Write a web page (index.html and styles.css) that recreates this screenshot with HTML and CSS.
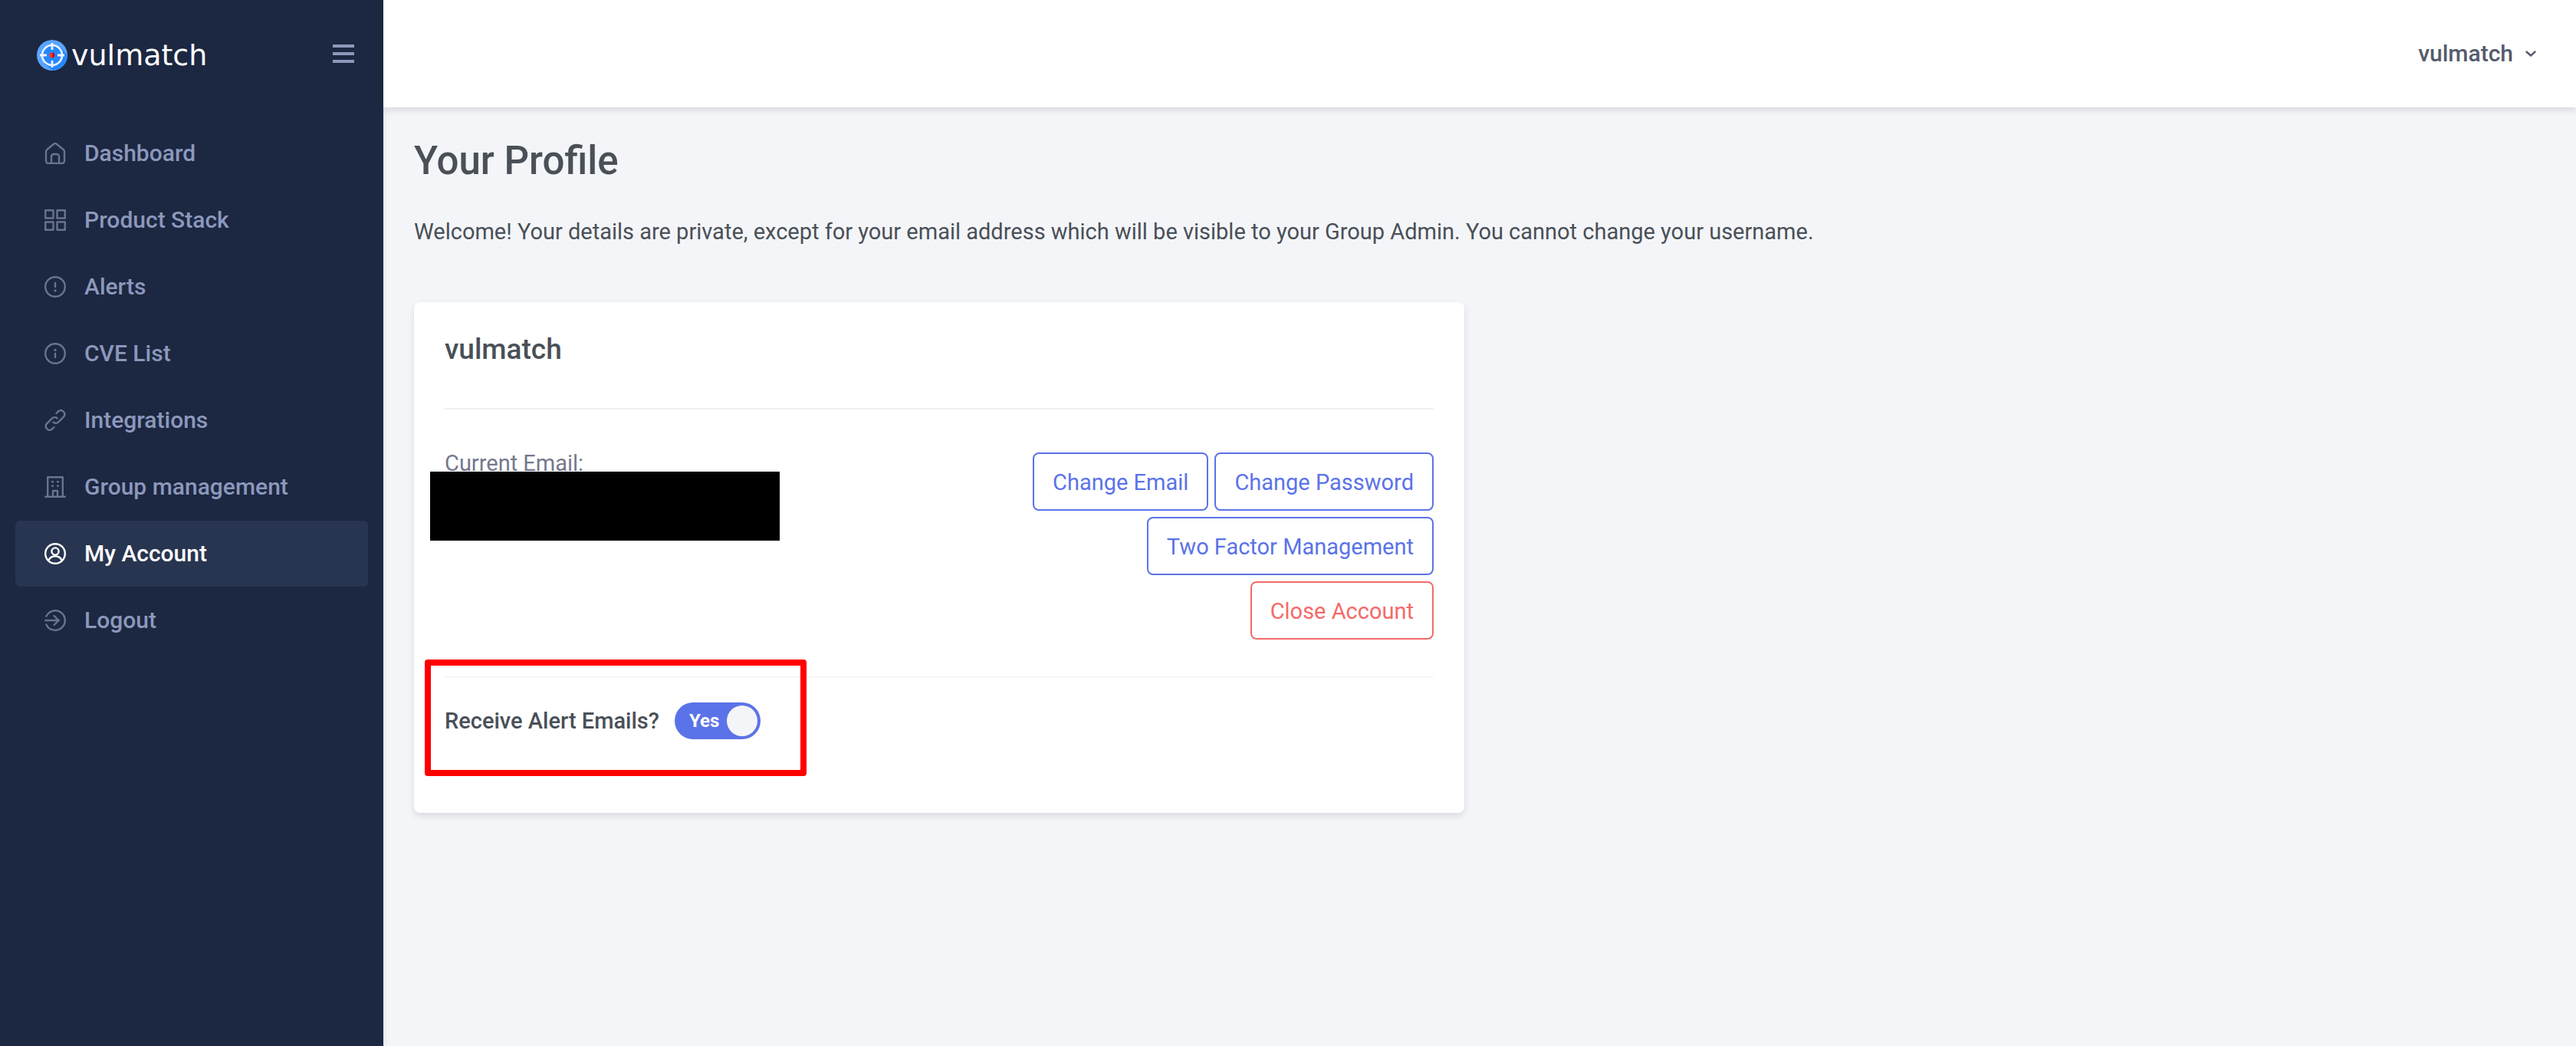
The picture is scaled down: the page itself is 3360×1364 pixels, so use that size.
FILE: index.html
```html
<!DOCTYPE html>
<html lang="en">
<head>
<meta charset="utf-8">
<meta name="viewport" content="width=device-width, initial-scale=1">
<title>Your Profile - vulmatch</title>
<link rel="stylesheet" href="styles.css">
</head>
<body>
<div class="app">
  <aside class="sidebar">
    <div class="brand-bar">
      <a class="brand" href="#">
        <svg class="brand-mark" viewBox="0 0 40 40" aria-hidden="true">
          <circle cx="20" cy="20" r="20" fill="#5aa4ff"/>
          <path d="M31 10 39.3 19A20 20 0 0 1 21 40L9.500 31z" fill="#2388ff"/>
          <circle cx="20" cy="20" r="13" fill="#2388ff" stroke="#eef2ff" stroke-width="2.600"/>
          <path d="M20 4v9M20 27v9M4 20h9M27 20h9" stroke="#eef2ff" stroke-width="2.800"/>
          <path d="M20 16.500a3.500 3.500 0 0 0 0 7z" fill="#ff3a1e"/>
          <path d="M20 16.500a3.500 3.500 0 0 1 0 7z" fill="#cc0a2c"/>
        </svg>
        <span>vulmatch</span>
      </a>
      <button class="menu-toggle" type="button" aria-label="Toggle menu">
        <svg viewBox="0 0 28 24" aria-hidden="true"><path d="M0 0h28v4H0zM0 10h28v4H0zM0 20h28v4H0z" fill="currentColor"/></svg>
      </button>
    </div>
    <nav class="nav">
      <a class="nav-item" href="#">
        <svg class="icon" viewBox="0 0 28 28" aria-hidden="true"><path d="M2 11.500a3 3 0 0 1 1-2.200L12.300 1.700a2.600 2.600 0 0 1 3.400 0L25 9.300a3 3 0 0 1 1 2.200V24a3 3 0 0 1-3 3H5a3 3 0 0 1-3-3zM9 27V18a3 3 0 0 1 3-3h4a3 3 0 0 1 3 3v9"/></svg>
        <span>Dashboard</span>
      </a>
      <a class="nav-item" href="#">
        <svg class="icon" viewBox="0 0 28 28" aria-hidden="true"><path d="M1.200 1.200h10.300v10.300H1.200zM16.500 1.200h10.300v10.300H16.500zM1.200 16.500h10.300v10.300H1.200zM16.500 16.500h10.300v10.300H16.500z"/></svg>
        <span>Product Stack</span>
      </a>
      <a class="nav-item" href="#">
        <svg class="icon" viewBox="0 0 28 28" aria-hidden="true"><circle cx="14" cy="14" r="12.800"/><path d="M14 9v5"/><path d="M14 18.800v.1" stroke-width="3.200"/></svg>
        <span>Alerts</span>
      </a>
      <a class="nav-item" href="#">
        <svg class="icon" viewBox="0 0 28 28" aria-hidden="true"><circle cx="14" cy="14" r="12.800"/><path d="M14 14v5"/><path d="M14 9.300v.1" stroke-width="3.200"/></svg>
        <span>CVE List</span>
      </a>
      <a class="nav-item" href="#">
        <svg class="icon" viewBox="0 0 28 28" aria-hidden="true"><path d="M11.500 16.500a5 5 0 0 0 6.700-.2l7-7a5 5 0 0 0-7-7L15.500 5M16.500 11.500a5 5 0 0 0-6.700.2l-7 7a5 5 0 0 0 7 7l2.700-2.700"/></svg>
        <span>Integrations</span>
      </a>
      <a class="nav-item" href="#">
        <svg class="icon" viewBox="0 0 28 28" aria-hidden="true"><path d="M1.200 26.800h25.600M4.200 26.500V1.200h19.600v25.300M11 26.500V19h6v7.500M10 7.200h1M17 7.200h1M10 12.600h1M17 12.600h1"/></svg>
        <span>Group management</span>
      </a>
      <a class="nav-item active" href="#" aria-current="page">
        <svg class="icon" viewBox="0 0 28 28" aria-hidden="true"><circle cx="14" cy="14" r="12.800"/><circle cx="14" cy="11" r="4.600"/><path d="M5.200 22.800a9.700 9.700 0 0 1 17.600 0"/></svg>
        <span>My Account</span>
      </a>
      <a class="nav-item" href="#">
        <svg class="icon" viewBox="0 0 28 28" aria-hidden="true"><path d="M1.200 14H19M12.500 8l6 6-6 6M2.400 8.600a12.800 12.800 0 1 1 0 10.800"/></svg>
        <span>Logout</span>
      </a>
    </nav>
  </aside>

  <div class="page">
    <header class="topbar">
      <button class="user-menu" type="button">
        <span>vulmatch</span>
        <svg viewBox="0 0 14 8" aria-hidden="true"><path d="M1.500 1.500 7 6.500l5.500-5"/></svg>
      </button>
    </header>

    <main class="content">
      <h1 class="page-title">Your Profile</h1>
      <p class="intro">Welcome! Your details are private, except for your email address which will be visible to your Group Admin. You cannot change your username.</p>

      <div class="cards">
        <section class="card">
          <h2 class="card-title">vulmatch</h2>
          <div class="details">
            <div class="email">
              <span>Current Email:</span>
              <div class="redacted"></div>
            </div>
            <div class="actions">
              <button class="btn" type="button">Change Email</button>
              <button class="btn" type="button">Change Password</button>
              <button class="btn" type="button">Two Factor Management</button>
              <button class="btn danger" type="button">Close Account</button>
            </div>
          </div>
          <div class="alerts">
            <label for="alert-emails">Receive Alert Emails?</label>
            <span class="switch">
              <input type="checkbox" id="alert-emails" checked>
              <span class="switch-text">Yes</span>
            </span>
            <div class="highlight"></div>
          </div>
        </section>
      </div>
    </main>
  </div>
</div>
</body>
</html>
```
FILE: styles.css
```css
* {
  box-sizing: border-box;
}

body {
  margin: 0;
  background: #f4f5f8;
  color: #495057;
  font-family: Roboto, "Liberation Sans", sans-serif;
  font-size: 29px;
  line-height: 44px;
}

button {
  font: inherit;
  cursor: pointer;
}

a {
  color: inherit;
  text-decoration: none;
}

.app {
  display: flex;
  min-height: 100vh;
}

/* Sidebar */
.sidebar {
  flex: 0 0 500px;
  background: #1c2741;
  color: #8c98bc;
  box-shadow: 0 4px 8px rgba(15, 34, 58, 0.12);
}

.brand-bar {
  display: flex;
  align-items: center;
  justify-content: space-between;
  height: 140px;
  padding: 0 38px 0 48px;
}

.brand {
  display: flex;
  align-items: center;
  gap: 5px;
  padding-top: 4px;
  color: #fff;
  font-family: "DejaVu Sans", sans-serif;
  font-size: 38px;
}

.brand-mark {
  width: 40px;
  height: 40px;
}

.menu-toggle {
  display: flex;
  padding: 0;
  border: 0;
  background: none;
  color: #8c98bc;
}

.menu-toggle svg {
  width: 28px;
  height: 24px;
}

.nav {
  display: flex;
  flex-direction: column;
  gap: 1px;
  padding: 17px 20px;
}

.nav-item {
  display: flex;
  align-items: center;
  gap: 24px;
  height: 86px;
  padding: 0 38px;
  border-radius: 6px;
  font-size: 30px;
  font-weight: 500;
}

.icon {
  width: 28px;
  height: 28px;
  fill: none;
  stroke: #69738f;
  stroke-width: 2.4;
  stroke-linecap: round;
  stroke-linejoin: round;
}

.nav-item.active {
  background: #283550;
  color: #fff;
}

.nav-item.active .icon {
  stroke: #fff;
}

/* Top bar */
.page {
  flex: 1;
  min-width: 0;
}

.topbar {
  display: flex;
  justify-content: flex-end;
  align-items: center;
  height: 140px;
  padding: 0 52px;
  background: #fff;
  box-shadow: 0 4px 8px rgba(15, 34, 58, 0.12);
}

.user-menu {
  display: flex;
  align-items: center;
  gap: 16px;
  padding: 0;
  border: 0;
  background: none;
  color: #555b6d;
  font-size: 30px;
  font-weight: 500;
}

.user-menu svg {
  width: 14px;
  height: 8px;
  fill: none;
  stroke: currentColor;
  stroke-width: 2.4;
  stroke-linecap: round;
  stroke-linejoin: round;
}

/* Content */
.content {
  padding: 40px;
}

.page-title {
  margin: 0 0 40px;
  font-size: 51px;
  font-weight: 500;
  line-height: 60px;
}

.intro {
  margin: 0 0 70px;
}

.cards {
  display: grid;
  grid-template-columns: 1fr 1fr;
  gap: 40px;
}

.card {
  padding: 40px 40px 96px;
  border-radius: 8px;
  background: #fff;
  box-shadow: 0 4px 8px rgba(15, 34, 58, 0.12);
}

.card-title {
  margin: 0;
  padding-bottom: 54px;
  border-bottom: 2px solid #f1f1f3;
  font-size: 37px;
  font-weight: 500;
  line-height: 44px;
}

.details {
  display: flex;
  justify-content: space-between;
  padding: 56px 0 48px;
  border-bottom: 2px solid #f5f6f8;
}

.email {
  position: relative;
  color: #74788d;
  line-height: 28px;
}

.redacted {
  position: absolute;
  top: 25px;
  left: -19px;
  width: 456px;
  height: 90px;
  background: #000;
}

.actions {
  display: flex;
  flex-wrap: wrap;
  justify-content: flex-end;
  gap: 8px;
  width: 600px;
}

.btn {
  height: 76px;
  padding: 2px 24px 0;
  border: 2px solid #5b73e8;
  border-radius: 8px;
  background: none;
  color: #5b73e8;
}

.btn.danger {
  border-color: #f46a6a;
  color: #f46a6a;
}

.alerts {
  position: relative;
  display: flex;
  align-items: center;
  gap: 20px;
  padding-top: 32px;
  font-weight: 500;
}

.switch {
  display: grid;
  align-items: center;
  width: 112px;
  height: 48px;
}

.switch > * {
  grid-area: 1 / 1;
}

.switch input {
  display: flex;
  justify-content: flex-start;
  width: 112px;
  height: 48px;
  margin: 0;
  padding: 4px;
  border-radius: 24px;
  background: #adb5bd;
  appearance: none;
  cursor: pointer;
}

.switch input::before {
  content: "";
  width: 40px;
  height: 40px;
  border-radius: 50%;
  background: #f4f5f8;
}

.switch input:checked {
  justify-content: flex-end;
  background: #5b73e8;
}

.switch-text {
  padding-left: 19px;
  color: #fff;
  font-size: 24px;
  font-weight: 700;
  line-height: 32px;
  pointer-events: none;
}

/* Callout frame drawn around the alert setting */
.highlight {
  position: absolute;
  top: -24px;
  left: -26px;
  width: 498px;
  height: 152px;
  border: 8px solid #f00;
  border-radius: 4px;
  pointer-events: none;
}
```
